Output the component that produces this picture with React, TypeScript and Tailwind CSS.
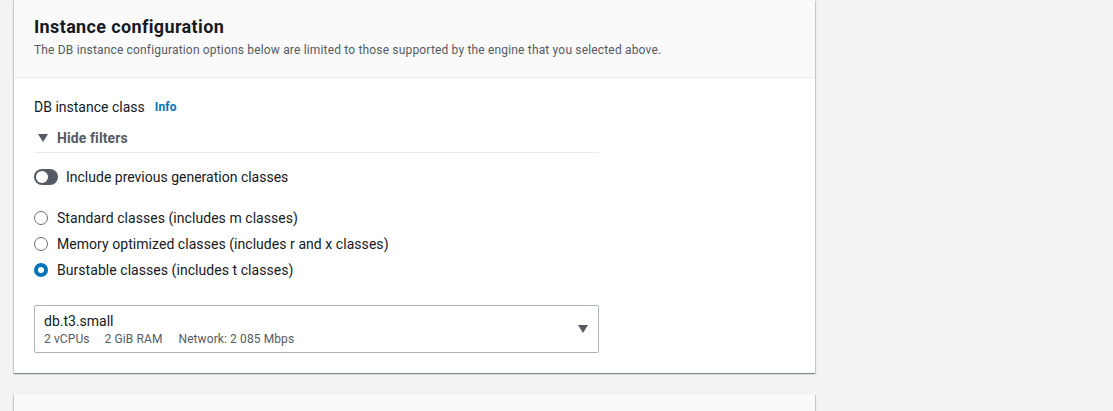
import React from "react";

const font = { fontFamily: "Roboto, 'Liberation Sans', sans-serif" };

function Radio({ checked, label }: { checked?: boolean; label: string }) {
  return (
    <div className="flex items-center h-[26px]">
      {checked ? (
        <span className="w-[14px] h-[14px] rounded-full bg-[#0073bb] flex items-center justify-center">
          <span className="w-[6px] h-[6px] rounded-full bg-white" />
        </span>
      ) : (
        <span className="w-[14px] h-[14px] rounded-full border-[1.5px] border-[#687078] bg-white" />
      )}
      <span className="ml-[9px] text-[14px] leading-[22px] text-[#16191f] tracking-[0.05px]">{label}</span>
    </div>
  );
}

export default function App() {
  return (
    <div className="w-[1113px] h-[411px] bg-[#f2f3f3] overflow-hidden" style={font}>
      <div className="ml-[14px] w-[801px] bg-white shadow-[0_1px_1px_0_rgba(0,28,36,0.3),1px_1px_1px_0_rgba(0,28,36,0.15),-1px_1px_1px_0_rgba(0,28,36,0.15)]">
        <div className="bg-[#fafafa] border-b border-[#eaeded] px-[20px] pt-[16px] pb-[19px]">
          <div className="text-[18px] leading-[22px] font-bold text-[#16191f] tracking-[0.36px]">Instance configuration</div>
          <div className="mt-[4px] text-[12px] leading-[16px] text-[#545b64] tracking-[0.17px]">
            The DB instance configuration options below are limited to those supported by the engine that you selected above.
          </div>
        </div>
        <div className="px-[20px] pt-[18px] pb-[20px]">
          <div className="flex items-center h-[22px]">
            <span className="text-[14px] text-[#16191f]">DB instance class</span>
            <span className="ml-[10px] text-[12px] font-bold text-[#0073bb] tracking-[0.2px]">Info</span>
          </div>
          <div className="w-[565px]">
            <div className="mt-[9px] flex items-center h-[22px]">
              <svg width="10" height="8" viewBox="0 0 10 8" className="ml-[4px]">
                <path d="M0 0 L10 0 L5 8 Z" fill="#545b64" />
              </svg>
              <span className="ml-[9px] text-[14px] font-bold text-[#545b64] tracking-[0.1px]">Hide filters</span>
            </div>
            <div className="mt-[3px] border-b border-[#eaeded]" />
          </div>
          <div className="mt-[13px] flex items-center h-[22px]">
            <span className="relative w-[24px] h-[16px] rounded-full bg-[#545b64]">
              <span className="absolute left-[2px] top-[2px] w-[12px] h-[12px] rounded-full bg-white" />
            </span>
            <span className="ml-[8px] text-[14px] text-[#16191f]">Include previous generation classes</span>
          </div>
          <div className="mt-[17px] flex flex-col">
            <Radio label="Standard classes (includes m classes)" />
            <Radio label="Memory optimized classes (includes r and x classes)" />
            <Radio checked label="Burstable classes (includes t classes)" />
          </div>
          <div className="mt-[22px] w-[565px] h-[48px] border border-[#aab7b8] rounded-[2px] flex items-center pl-[9px] pr-[10px]">
            <div className="flex-1 flex flex-col">
              <span className="text-[14px] leading-[20px] text-[#16191f]">db.t3.small</span>
              <div className="flex text-[12px] leading-[16px] text-[#545b64] tracking-[0.1px]">
                <span>2 vCPUs</span>
                <span className="ml-[15px]">2 GiB RAM</span>
                <span className="ml-[16px]">Network: 2 085 Mbps</span>
              </div>
            </div>
            <svg width="10" height="8" viewBox="0 0 10 8">
              <path d="M0 0 L10 0 L5 8 Z" fill="#545b64" />
            </svg>
          </div>
        </div>
      </div>
      <div className="mt-[21px] ml-[14px] w-[801px] h-[40px] bg-[#fafafa] shadow-[0_1px_1px_0_rgba(0,28,36,0.3),1px_1px_1px_0_rgba(0,28,36,0.15),-1px_1px_1px_0_rgba(0,28,36,0.15)]" />
    </div>
  );
}
